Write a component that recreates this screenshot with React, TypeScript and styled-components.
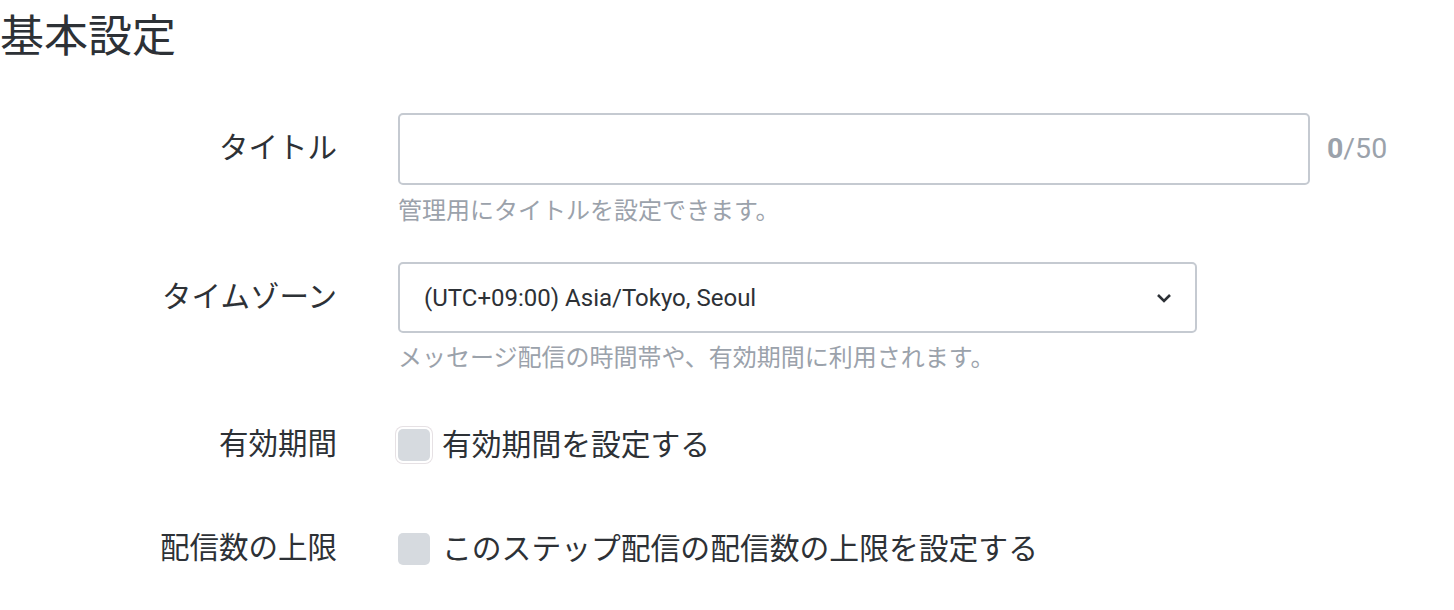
import React from "react";
import styled, { createGlobalStyle } from "styled-components";

const GlobalStyle = createGlobalStyle`
  html, body { margin: 0; padding: 0; background: #fff; }
  body { font-family: Roboto, "Noto Sans CJK JP", sans-serif; color: #2d3136; }
  * { box-sizing: border-box; }
`;

const Page = styled.div`
  width: 1454px;
  height: 610px;
  overflow: hidden;
`;

const Heading = styled.h2`
  margin: 0;
  font-size: 44px;
  line-height: 66px;
  font-weight: 400;
  color: #2d3136;
  font-family: "Noto Sans CJK JP", sans-serif;
`;

const Form = styled.div`
  display: flex;
  flex-direction: column;
  padding-top: 47px;
`;

const Row = styled.div<{ $mt?: number }>`
  display: grid;
  grid-template-columns: 337px 1fr;
  column-gap: 61px;
  margin-top: ${(p) => p.$mt ?? 0}px;
`;

const Label = styled.div<{ $h: number }>`
  text-align: right;
  font-family: "Noto Sans CJK JP", sans-serif;
  font-size: 29.5px;
  line-height: ${(p) => p.$h - 7}px;
  padding-bottom: 7px;
  color: #2d3136;
  white-space: nowrap;
`;

const Control = styled.div`
  display: flex;
  flex-direction: column;
`;

const InputLine = styled.div`
  display: flex;
  align-items: center;
  gap: 17px;
`;

const TextInput = styled.input`
  width: 912px;
  height: 72px;
  border: 2px solid #c5cad1;
  border-radius: 5px;
  padding: 0 24px;
  font-size: 24px;
  outline: none;
  background: #fff;
`;

const Counter = styled.div`
  font-family: Roboto, sans-serif;
  font-size: 28.5px;
  color: #9ba2ab;
  padding-bottom: 2px;
  b { font-weight: 700; }
`;

const Helper = styled.div<{ $mt: number }>`
  margin-top: ${(p) => p.$mt}px;
  font-family: "Noto Sans CJK JP", sans-serif;
  font-size: 24px;
  line-height: 32px;
  color: #9ba2ab;
`;

const Select = styled.div`
  width: 799px;
  height: 71px;
  border: 2px solid #c5cad1;
  border-radius: 5px;
  padding: 0 24px 0 24px;
  display: flex;
  align-items: center;
  justify-content: space-between;
  font-family: Roboto, "Noto Sans CJK JP", sans-serif;
  font-size: 24px;
  color: #2d3136;
`;

const Chevron = styled.svg`
  width: 16px;
  height: 12px;
  margin-right: -1px;
`;

const CheckLine = styled.label`
  display: flex;
  align-items: center;
  gap: 12px;
  height: 60px;
  font-family: "Noto Sans CJK JP", sans-serif;
  font-size: 29.8px;
  color: #2d3136;
`;

const CheckText = styled.span`
  line-height: 40px;
  padding-bottom: 6px;
`;

const Box = styled.span<{ $focus?: boolean }>`
  width: 32px;
  height: 32px;
  border-radius: 5px;
  background: #d6dadf;
  flex: none;
  box-shadow: ${(p) => (p.$focus ? "0 0 0 2px #fff, 0 0 0 3px #e6e1e4" : "none")};
`;

export default function App() {
  return (
    <>
      <GlobalStyle />
      <Page>
        <Heading>基本設定</Heading>
        <Form>
          <Row>
            <Label $h={72}>タイトル</Label>
            <Control>
              <InputLine>
                <TextInput />
                <Counter>
                  <b>0</b>/50
                </Counter>
              </InputLine>
              <Helper $mt={8}>管理用にタイトルを設定できます。</Helper>
            </Control>
          </Row>
          <Row $mt={37}>
            <Label $h={71}>タイムゾーン</Label>
            <Control>
              <Select>
                <span>(UTC+09:00) Asia/Tokyo, Seoul</span>
                <Chevron viewBox="0 0 16 12">
                  <path d="M2 3 L8 9 L14 3" fill="none" stroke="#2d3136" strokeWidth="2.6" />
                </Chevron>
              </Select>
              <Helper $mt={7}>メッセージ配信の時間帯や、有効期間に利用されます。</Helper>
            </Control>
          </Row>
          <Row $mt={43}>
            <Label $h={60}>有効期間</Label>
            <CheckLine>
              <Box $focus />
              <CheckText>有効期間を設定する</CheckText>
            </CheckLine>
          </Row>
          <Row $mt={44}>
            <Label $h={60}>配信数の上限</Label>
            <CheckLine>
              <Box />
              <CheckText>このステップ配信の配信数の上限を設定する</CheckText>
            </CheckLine>
          </Row>
        </Form>
      </Page>
    </>
  );
}
